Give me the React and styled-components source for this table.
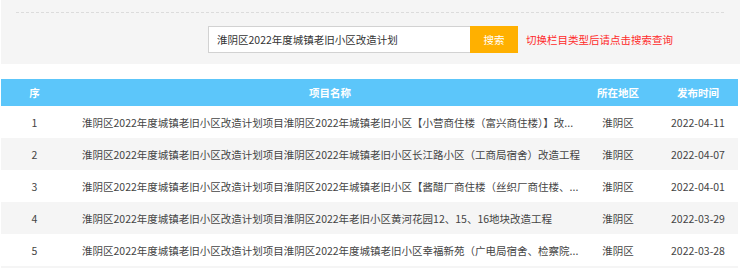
import styled, { createGlobalStyle } from "styled-components";

const GlobalStyle = createGlobalStyle`
  body {
    margin: 0;
    background: #fff;
    font-family: "Noto Sans CJK SC", "Microsoft YaHei", sans-serif;
  }
`;

const rows = [
  { id: 1, title: "淮阴区2022年度城镇老旧小区改造计划项目淮阴区2022年城镇老旧小区【小营商住楼（富兴商住楼）】改...", area: "淮阴区", date: "2022-04-11" },
  { id: 2, title: "淮阴区2022年度城镇老旧小区改造计划项目淮阴区2022年城镇老旧小区长江路小区（工商局宿舍）改造工程", area: "淮阴区", date: "2022-04-07" },
  { id: 3, title: "淮阴区2022年度城镇老旧小区改造计划项目淮阴区2022年城镇老旧小区【酱醋厂商住楼（丝织厂商住楼、...", area: "淮阴区", date: "2022-04-01" },
  { id: 4, title: "淮阴区2022年度城镇老旧小区改造计划项目淮阴区2022年老旧小区黄河花园12、15、16地块改造工程", area: "淮阴区", date: "2022-03-29" },
  { id: 5, title: "淮阴区2022年度城镇老旧小区改造计划项目淮阴区2022年度城镇老旧小区幸福新苑（广电局宿舍、检察院...", area: "淮阴区", date: "2022-03-28" },
  { id: 6, title: "", area: "", date: "" },
];

export default function App() {
  return (
    <>
      <GlobalStyle />
      <Page>
        <SearchPanel>
          <Dashed />
          <SearchRow>
            <SearchInput defaultValue="淮阴区2022年度城镇老旧小区改造计划" />
            <SearchButton>搜索</SearchButton>
            <Hint>切换栏目类型后请点击搜索查询</Hint>
          </SearchRow>
        </SearchPanel>

        <Table>
          <HeadRow>
            <Cell>序</Cell>
            <Cell>项目名称</Cell>
            <Cell>所在地区</Cell>
            <Cell $pad>发布时间</Cell>
          </HeadRow>
          {rows.map((r, i) => (
            <Row key={r.id} $even={i % 2 === 1}>
              <Cell>{r.title ? r.id : ""}</Cell>
              <TitleCell>{r.title}</TitleCell>
              <Cell>{r.area}</Cell>
              <Cell $pad>{r.date}</Cell>
            </Row>
          ))}
        </Table>
      </Page>
    </>
  );
}

const Page = styled.div`
  width: 740px;
  height: 268px;
  overflow: hidden;
  padding: 0 1px;
  box-sizing: border-box;
`;

const SearchPanel = styled.div`
  background: #f5f5f5;
  height: 64px;
  padding: 12px 16px 0 15px;
  box-sizing: border-box;
  margin-right: -1px;
`;

const Dashed = styled.div`
  border-top: 1px dashed #dcdcdc;
`;

const SearchRow = styled.div`
  display: flex;
  align-items: center;
  margin-top: 13px;
  padding-left: 192px;
`;

const SearchInput = styled.input`
  width: 262px;
  height: 27px;
  box-sizing: border-box;
  border: 1px solid #d2d2d2;
  border-right: none;
  background: #fff;
  padding: 0 8px;
  font-family: "Noto Sans CJK SC", sans-serif;
  font-size: 10.5px;
  color: #333;
  outline: none;
`;

const SearchButton = styled.button`
  width: 48px;
  height: 27px;
  border: none;
  background: #ffb000;
  color: #fff;
  font-family: "Noto Sans CJK SC", sans-serif;
  font-size: 10.5px;
  padding: 0;
`;

const Hint = styled.span`
  margin-left: 8px;
  color: #ff2a2a;
  font-size: 10.5px;
`;

const Table = styled.div`
  margin-top: 15px;
  width: 737px;
`;

const HeadRow = styled.div`
  display: grid;
  grid-template-columns: 67px 524px 52px 94px;
  height: 27px;
  align-items: center;
  background: #5cc6fa;
  color: #fff;
  font-weight: bold;
  font-size: 10.5px;
  text-align: center;
`;

const Row = styled.div`
  display: grid;
  grid-template-columns: 67px 524px 52px 94px;
  height: 32px;
  align-items: center;
  background: ${(p) => (p.$even ? "#f5f5f5" : "#fff")};
  color: #444;
  font-size: 10.5px;
  text-align: center;
`;

const Cell = styled.div`
  white-space: nowrap;
  padding-left: ${(p) => (p.$pad ? "14px" : "0")};
`;

const TitleCell = styled.div`
  text-align: left;
  padding: 0 4px 0 14px;
  white-space: nowrap;
  overflow: hidden;
`;
